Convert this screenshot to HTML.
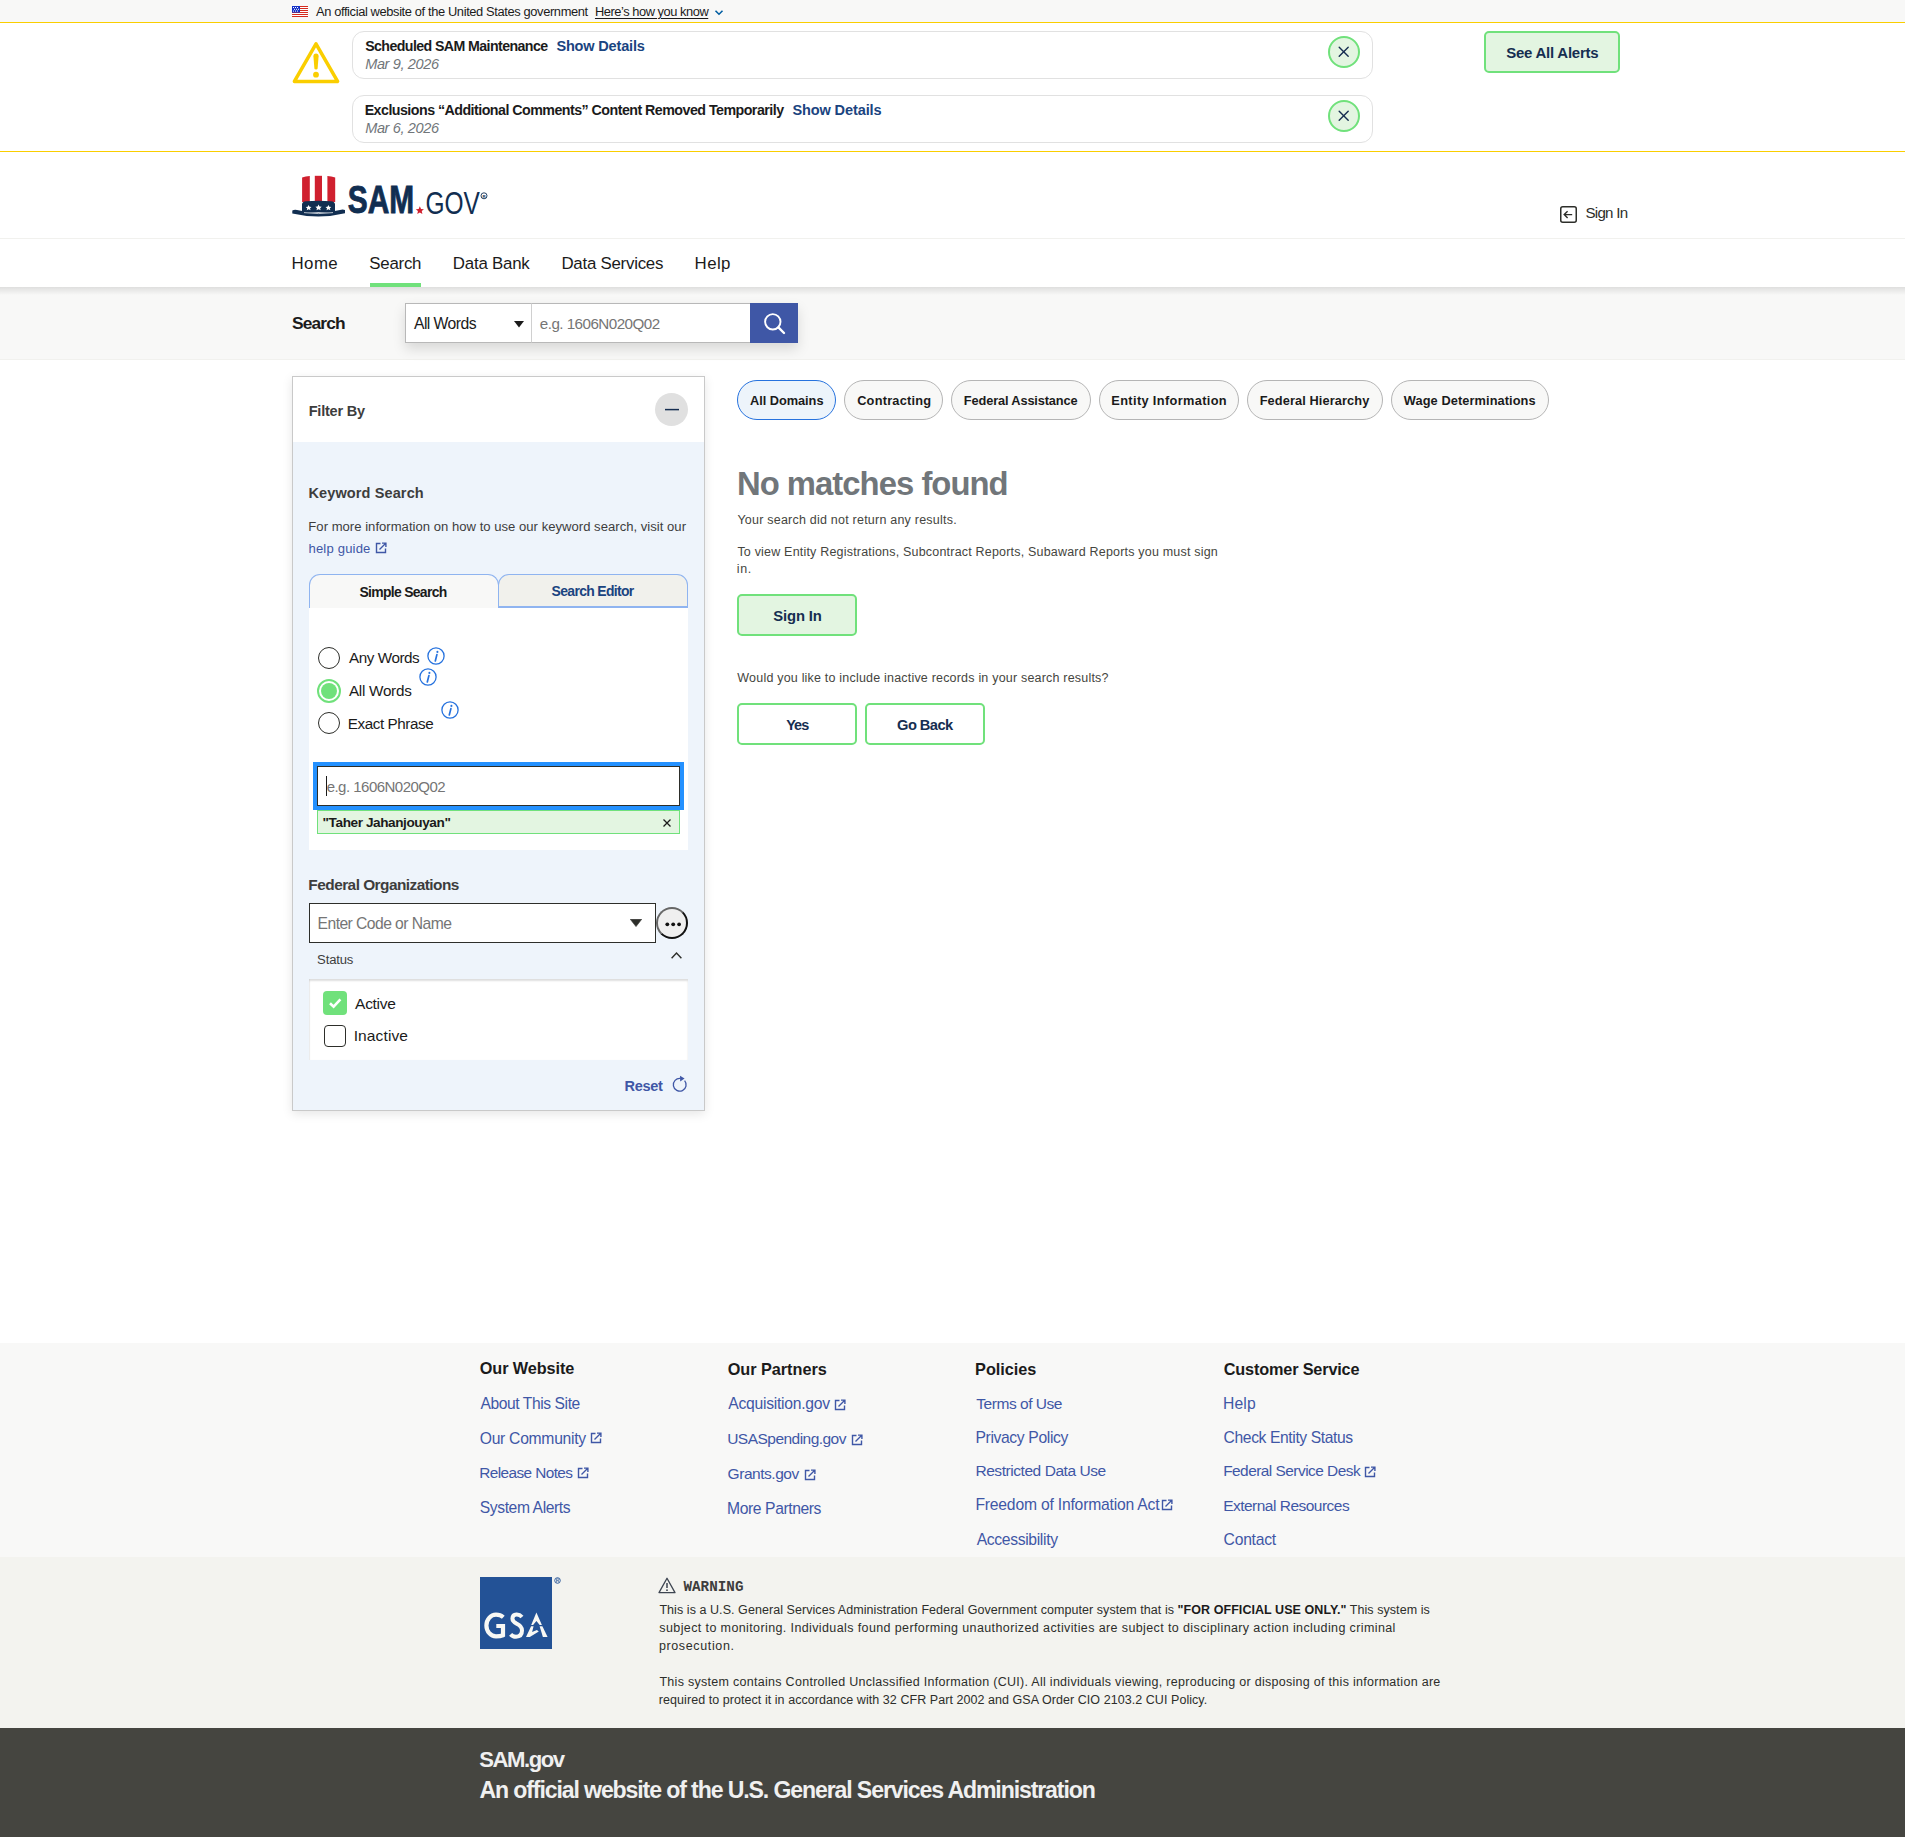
<!DOCTYPE html><html><head><meta charset="utf-8"><title>SAM.gov Search</title><style>

html,body{margin:0;padding:0}
body{width:1905px;height:1837px;overflow:hidden;position:relative;background:#fff;font-family:"Liberation Sans",sans-serif}
.t{position:absolute;white-space:nowrap;line-height:1;margin:0}
.t b{font-weight:bold}

</style></head><body>
<div style="position:absolute;left:0px;top:0px;width:1905px;height:22px;background:#f8f8f7"></div>
<div style="position:absolute;left:0px;top:22px;width:1905px;height:1px;background:#face00"></div>
<svg style="position:absolute;left:292px;top:6px;" width="16" height="11" viewBox="0 0 16 11"><rect x="0" y="0" width="16" height="11" fill="#fff"/><rect x="0" y="0" width="16" height="1" fill="#d52b1e"/><rect x="0" y="2" width="16" height="1" fill="#d52b1e"/><rect x="0" y="4" width="16" height="1" fill="#d52b1e"/><rect x="0" y="6" width="16" height="1" fill="#d52b1e"/><rect x="0" y="8" width="16" height="1" fill="#d52b1e"/><rect x="0" y="10" width="16" height="1" fill="#d52b1e"/><rect x="0" y="0" width="8" height="6.6" fill="#1432c8"/><rect x="1.0" y="1.0" width="1" height="1" fill="#fff"/><rect x="1.0" y="4.6" width="1" height="1" fill="#fff"/><rect x="3.0" y="1.0" width="1" height="1" fill="#fff"/><rect x="3.0" y="4.6" width="1" height="1" fill="#fff"/><rect x="5.0" y="1.0" width="1" height="1" fill="#fff"/><rect x="5.0" y="4.6" width="1" height="1" fill="#fff"/><rect x="2.0" y="2.8" width="1" height="1" fill="#fff"/><rect x="4.0" y="2.8" width="1" height="1" fill="#fff"/><rect x="6.0" y="2.8" width="1" height="1" fill="#fff"/></svg>
<svg style="position:absolute;left:714px;top:9px;" width="10" height="7" viewBox="0 0 10 7"><path d="M1.5 1.8 L5 5.2 L8.5 1.8" fill="none" stroke="#005ea2" stroke-width="1.6"/></svg>
<div style="position:absolute;left:0px;top:151px;width:1905px;height:1px;background:#face00"></div>
<svg style="position:absolute;left:292px;top:41px;" width="48" height="44" viewBox="0 0 48 44"><path d="M24 2.8 L45.6 40.4 L2.4 40.4 Z" fill="none" stroke="#face00" stroke-width="3.5" stroke-linejoin="round"/><path d="M21.4 15.2 Q21.4 12.6 24 12.6 Q26.6 12.6 26.6 15.2 L25.6 27.6 Q25.5 28.6 24 28.6 Q22.5 28.6 22.4 27.6 Z" fill="#face00"/><circle cx="24" cy="33.7" r="2.9" fill="#face00"/></svg>
<div style="position:absolute;left:352px;top:31px;width:1021px;height:48px;box-sizing:border-box;border:1.5px solid #e1e1e1;border-radius:12px;background:#fff"></div>
<div style="position:absolute;left:1328px;top:36px;width:32px;height:32px;box-sizing:border-box;border:2px solid #70e17b;border-radius:50%;background:#e3f5e1"></div>
<svg style="position:absolute;left:1338px;top:46px;" width="12" height="12" viewBox="0 0 12 12"><line x1="1.2" y1="1.2" x2="10.2" y2="10.2" stroke="#162e51" stroke-width="1.4" stroke-linecap="round"/><line x1="10.2" y1="1.2" x2="1.2" y2="10.2" stroke="#162e51" stroke-width="1.4" stroke-linecap="round"/></svg>
<div style="position:absolute;left:352px;top:95px;width:1021px;height:48px;box-sizing:border-box;border:1.5px solid #e1e1e1;border-radius:12px;background:#fff"></div>
<div style="position:absolute;left:1328px;top:100px;width:32px;height:32px;box-sizing:border-box;border:2px solid #70e17b;border-radius:50%;background:#e3f5e1"></div>
<svg style="position:absolute;left:1338px;top:110px;" width="12" height="12" viewBox="0 0 12 12"><line x1="1.2" y1="1.2" x2="10.2" y2="10.2" stroke="#162e51" stroke-width="1.4" stroke-linecap="round"/><line x1="10.2" y1="1.2" x2="1.2" y2="10.2" stroke="#162e51" stroke-width="1.4" stroke-linecap="round"/></svg>
<div style="position:absolute;left:1484px;top:31px;width:136px;height:42px;box-sizing:border-box;border:2px solid #70e17b;border-radius:5px;background:#e3f5e1"></div>
<svg style="position:absolute;left:292px;top:172px;" width="200" height="50" viewBox="0 0 200 50"><path d="M10.1 5.4 Q13.6 4.4 17.8 4 L17.8 30 L10.1 30 Z" fill="#d0202f"/><path d="M22.8 3.8 L30 3.8 L30 30 L22.8 30 Z" fill="#d0202f"/><path d="M35.4 4 Q39.4 4.4 43.2 5.4 L43.2 30 L35.4 30 Z" fill="#d0202f"/><path d="M10 32.6 Q10 29.6 14 29.3 Q26.6 28 39 29.3 Q43 29.6 43 32.6 L43 40 L10 40 Z" fill="#112e51"/><path d="M16.6 32.9 l0.9 1.9 2 .2 -1.5 1.3 .5 2 -1.9 -1 -1.8 1 .4 -2 -1.5 -1.3 2 -.2z" fill="#fff"/><path d="M26.5 32.6 l1 2 2.2 .2 -1.6 1.4 .5 2.1 -2.1 -1.1 -2 1.1 .5 -2.1 -1.6 -1.4 2.2 -.2z" fill="#fff"/><path d="M36.4 32.9 l0.9 1.9 2 .2 -1.5 1.3 .5 2 -1.9 -1 -1.8 1 .4 -2 -1.5 -1.3 2 -.2z" fill="#fff"/><path d="M0.3 38.4 Q2.6 37.2 5 37.9 Q26.5 43.4 48 37.9 Q51 37.2 53 38 L53 41.2 Q27 47.6 0.3 41.4 Z" fill="#112e51"/><path d="M12 40.6 Q26.5 42.6 41 40.6" fill="none" stroke="#fff" stroke-width="0.7"/><text x="55.8" y="40.6" font-family="Liberation Sans" font-weight="bold" font-size="39" fill="#112e51" stroke="#112e51" stroke-width="0.9" textLength="66.4" lengthAdjust="spacingAndGlyphs">SAM</text><path d="M127.8 34.2 l1.25 2.7 2.9 .3 -2.2 1.9 .65 2.9 -2.6 -1.5 -2.5 1.5 .65 -2.9 -2.2 -1.9 2.9 -.3z" fill="#d0202f"/><text x="133.4" y="41.5" font-family="Liberation Sans" font-size="32" fill="#112e51" textLength="54.4" lengthAdjust="spacingAndGlyphs" stroke="#fff" stroke-width="1.1" paint-order="stroke">GOV</text><circle cx="192" cy="23.8" r="3" fill="none" stroke="#112e51" stroke-width="0.9"/><text x="190.5" y="25.5" font-family="Liberation Sans" font-weight="bold" font-size="4.4" fill="#112e51">R</text></svg>
<div style="position:absolute;left:0px;top:238px;width:1905px;height:1px;background:#f1f1ee"></div>
<svg style="position:absolute;left:1559px;top:205px;" width="19" height="19" viewBox="0 0 19 19"><rect x="1.75" y="1.75" width="15.5" height="15.5" rx="2" fill="none" stroke="#2d2e2a" stroke-width="1.5"/><path d="M13.2 9.6 L5.2 9.6 M8.6 6.2 L5.2 9.6 L8.6 13" fill="none" stroke="#2d2e2a" stroke-width="1.4"/></svg>
<div style="position:absolute;left:370px;top:283px;width:51px;height:4px;background:#70e17b"></div>
<div style="position:absolute;left:0px;top:287px;width:1905px;height:72px;background:#f8f8f7"></div>
<div style="position:absolute;left:0px;top:287px;width:1905px;height:8px;background:linear-gradient(rgba(0,0,0,0.10),rgba(0,0,0,0))"></div>
<div style="position:absolute;left:0px;top:359px;width:1905px;height:1px;background:#f1f1ee"></div>
<div style="position:absolute;left:405px;top:303px;width:393px;height:40px;box-shadow:0 6px 12px rgba(0,0,0,0.13)"></div>
<div style="position:absolute;left:405px;top:303px;width:127px;height:40px;box-sizing:border-box;border:1px solid #b8b8b8;background:#fff"></div>
<div style="position:absolute;left:531px;top:303px;width:220px;height:40px;box-sizing:border-box;border:1px solid #b8b8b8;border-left-color:#d0d0d0;background:#fff"></div>
<svg style="position:absolute;left:514px;top:321px;" width="10" height="7" viewBox="0 0 10 7"><path d="M0 0 L10 0 L5 6.5 Z" fill="#1b1b1b"/></svg>
<div style="position:absolute;left:750px;top:303px;width:48px;height:40px;background:#3f57a6"></div>
<svg style="position:absolute;left:763px;top:312px;" width="24" height="24" viewBox="0 0 24 24"><circle cx="9.8" cy="9.8" r="7.7" fill="none" stroke="#fff" stroke-width="1.9"/><path d="M15.4 15.4 L21 21" stroke="#fff" stroke-width="2.4" stroke-linecap="round"/></svg>
<div style="position:absolute;left:292px;top:376px;width:413px;height:735px;box-sizing:border-box;border:1px solid #c9c9c9;background:#eef4fb;box-shadow:0 3px 10px rgba(0,0,0,0.10)"></div>
<div style="position:absolute;left:293px;top:377px;width:411px;height:65px;background:#fff"></div>
<div style="position:absolute;left:655px;top:393px;width:33px;height:33px;border-radius:50%;background:#e0e0e0"></div>
<svg style="position:absolute;left:664px;top:406px;" width="16" height="7" viewBox="0 0 16 7"><line x1="1" y1="3.6" x2="15" y2="3.6" stroke="#162e51" stroke-width="1.5"/></svg>
<svg style="position:absolute;left:375px;top:542px;" width="12" height="12" viewBox="0 0 12 12"><path d="M5.5 1.5 L1.5 1.5 L1.5 10.5 L10.5 10.5 L10.5 6.5" fill="none" stroke="#3f57a6" stroke-width="1.4"/><path d="M4.5 7.5 L10.5 1.5 M7 1.1 L10.9 1.1 L10.9 5" fill="none" stroke="#3f57a6" stroke-width="1.4"/></svg>
<div style="position:absolute;left:309px;top:574px;width:190px;height:34px;box-sizing:border-box;border:1px solid #8fb4f0;border-bottom:none;border-radius:11px 11px 0 0;background:#f8f8f7"></div>
<div style="position:absolute;left:498px;top:574px;width:190px;height:34px;box-sizing:border-box;border:1px solid #8fb4f0;border-radius:11px 11px 0 0;background:#f1f1ec;border-bottom:2px solid #8fb4f0"></div>
<div style="position:absolute;left:309px;top:608px;width:379px;height:242px;background:#fff"></div>
<div style="position:absolute;left:318px;top:647px;width:22px;height:22px;box-sizing:border-box;border:1.6px solid #2d2e2a;border-radius:50%;background:#fff"></div>
<div style="position:absolute;left:317px;top:679px;width:24px;height:24px;box-sizing:border-box;border:2px solid #70e17b;border-radius:50%;background:#fff"></div>
<div style="position:absolute;left:321px;top:683px;width:16px;height:16px;border-radius:50%;background:#70e17b"></div>
<div style="position:absolute;left:318px;top:712px;width:22px;height:22px;box-sizing:border-box;border:1.6px solid #2d2e2a;border-radius:50%;background:#fff"></div>
<svg style="position:absolute;left:427px;top:647px;" width="18" height="18" viewBox="0 0 18 18"><circle cx="9" cy="9" r="8.1" fill="none" stroke="#2672de" stroke-width="1.3"/><path d="M9.9 7.6 L8.3 14" stroke="#2672de" stroke-width="1.7" stroke-linecap="round"/><circle cx="10.4" cy="4.9" r="1.05" fill="#2672de"/></svg>
<svg style="position:absolute;left:419px;top:668px;" width="18" height="18" viewBox="0 0 18 18"><circle cx="9" cy="9" r="8.1" fill="none" stroke="#2672de" stroke-width="1.3"/><path d="M9.9 7.6 L8.3 14" stroke="#2672de" stroke-width="1.7" stroke-linecap="round"/><circle cx="10.4" cy="4.9" r="1.05" fill="#2672de"/></svg>
<svg style="position:absolute;left:441px;top:701px;" width="18" height="18" viewBox="0 0 18 18"><circle cx="9" cy="9" r="8.1" fill="none" stroke="#2672de" stroke-width="1.3"/><path d="M9.9 7.6 L8.3 14" stroke="#2672de" stroke-width="1.7" stroke-linecap="round"/><circle cx="10.4" cy="4.9" r="1.05" fill="#2672de"/></svg>
<div style="position:absolute;left:313px;top:762px;width:371px;height:48px;background:#2491ff"></div>
<div style="position:absolute;left:317px;top:766px;width:363px;height:40px;box-sizing:border-box;border:1.3px solid #2d2e2a;background:#fff"></div>
<div style="position:absolute;left:326px;top:776px;width:1.3px;height:20px;background:#1b1b1b"></div>
<div style="position:absolute;left:317px;top:810px;width:363px;height:24px;box-sizing:border-box;border:1px solid #70e17b;background:#e3f5e1"></div>
<svg style="position:absolute;left:662px;top:818px;" width="10" height="10" viewBox="0 0 10 10"><path d="M1.5 1.5 L8.5 8.5 M8.5 1.5 L1.5 8.5" stroke="#1b1b1b" stroke-width="1.3"/></svg>
<div style="position:absolute;left:309px;top:903px;width:347px;height:40px;box-sizing:border-box;border:1.5px solid #2d2e2a;background:#fff"></div>
<svg style="position:absolute;left:630px;top:919px;" width="12" height="8" viewBox="0 0 12 8"><path d="M0.3 0.3 L11.7 0.3 L6 7.6 Z" fill="#2d2e2a" stroke="#2d2e2a" stroke-width="0.6" stroke-linejoin="round"/></svg>
<div style="position:absolute;left:656px;top:907px;width:32px;height:32px;box-sizing:border-box;border:2px solid #111;border-top-color:#666;border-left-color:#666;border-radius:50%;background:#efefef"></div>
<svg style="position:absolute;left:664px;top:920px;" width="18" height="8" viewBox="0 0 18 8"><circle cx="3.3" cy="4.3" r="1.9" fill="#111"/><circle cx="9.2" cy="4.3" r="1.9" fill="#111"/><circle cx="15.1" cy="4.3" r="1.9" fill="#111"/></svg>
<svg style="position:absolute;left:670px;top:950px;" width="13" height="10" viewBox="0 0 13 10"><path d="M1.6 8.2 L6.5 3 L11.4 8.2" fill="none" stroke="#2d2e2a" stroke-width="1.4"/></svg>
<div style="position:absolute;left:309px;top:979px;width:379px;height:81px;background:#fff;box-shadow:inset 0 2px 2px rgba(0,0,0,0.13), inset 1px 0 1px rgba(0,0,0,0.05)"></div>
<div style="position:absolute;left:323px;top:991px;width:24px;height:24px;border-radius:4px;background:#70e17b"></div>
<svg style="position:absolute;left:323px;top:991px;" width="24" height="24" viewBox="0 0 24 24"><path d="M7 12.2 L10.6 15.6 L17.4 8.4" fill="none" stroke="#fff" stroke-width="2.6"/></svg>
<div style="position:absolute;left:324px;top:1025px;width:22px;height:22px;box-sizing:border-box;border:1.7px solid #2d2e2a;border-radius:4px;background:#fff"></div>
<svg style="position:absolute;left:672px;top:1074px;" width="17" height="19" viewBox="0 0 17 19"><path d="M12.6 6.6 A6.4 6.4 0 1 1 8.4 4.4" fill="none" stroke="#3f57a6" stroke-width="1.3"/><path d="M8 1.8 L12.6 4.6 L8.2 7.4 Z" fill="#3f57a6"/></svg>
<div style="position:absolute;left:737px;top:380px;width:99px;height:40px;box-sizing:border-box;border:1.3px solid #2672de;border-radius:20px;background:#edf4fb"></div>
<div style="position:absolute;left:844px;top:380px;width:99px;height:40px;box-sizing:border-box;border:1px solid #b5b5b5;border-radius:20px;background:#f8f8f7"></div>
<div style="position:absolute;left:951px;top:380px;width:140px;height:40px;box-sizing:border-box;border:1px solid #b5b5b5;border-radius:20px;background:#f8f8f7"></div>
<div style="position:absolute;left:1099px;top:380px;width:140px;height:40px;box-sizing:border-box;border:1px solid #b5b5b5;border-radius:20px;background:#f8f8f7"></div>
<div style="position:absolute;left:1247px;top:380px;width:136px;height:40px;box-sizing:border-box;border:1px solid #b5b5b5;border-radius:20px;background:#f8f8f7"></div>
<div style="position:absolute;left:1391px;top:380px;width:158px;height:40px;box-sizing:border-box;border:1px solid #b5b5b5;border-radius:20px;background:#f8f8f7"></div>
<div style="position:absolute;left:737px;top:594px;width:120px;height:42px;box-sizing:border-box;border:2px solid #70e17b;border-radius:5px;background:#e3f5e1"></div>
<div style="position:absolute;left:737px;top:703px;width:120px;height:42px;box-sizing:border-box;border:2px solid #70e17b;border-radius:5px;background:#fff"></div>
<div style="position:absolute;left:865px;top:703px;width:120px;height:42px;box-sizing:border-box;border:2px solid #70e17b;border-radius:5px;background:#fff"></div>
<div style="position:absolute;left:0px;top:1343px;width:1905px;height:214px;background:#f8f8f7"></div>
<div style="position:absolute;left:0px;top:1557px;width:1905px;height:171px;background:#f3f3ef"></div>
<div style="position:absolute;left:0px;top:1728px;width:1905px;height:109px;background:#454540"></div>
<svg style="position:absolute;left:834px;top:1399px;" width="12" height="12" viewBox="0 0 12 12"><path d="M5.5 1.5 L1.5 1.5 L1.5 10.5 L10.5 10.5 L10.5 6.5" fill="none" stroke="#3f57a6" stroke-width="1.4"/><path d="M4.5 7.5 L10.5 1.5 M7 1.1 L10.9 1.1 L10.9 5" fill="none" stroke="#3f57a6" stroke-width="1.4"/></svg>
<svg style="position:absolute;left:851px;top:1434px;" width="12" height="12" viewBox="0 0 12 12"><path d="M5.5 1.5 L1.5 1.5 L1.5 10.5 L10.5 10.5 L10.5 6.5" fill="none" stroke="#3f57a6" stroke-width="1.4"/><path d="M4.5 7.5 L10.5 1.5 M7 1.1 L10.9 1.1 L10.9 5" fill="none" stroke="#3f57a6" stroke-width="1.4"/></svg>
<svg style="position:absolute;left:804px;top:1469px;" width="12" height="12" viewBox="0 0 12 12"><path d="M5.5 1.5 L1.5 1.5 L1.5 10.5 L10.5 10.5 L10.5 6.5" fill="none" stroke="#3f57a6" stroke-width="1.4"/><path d="M4.5 7.5 L10.5 1.5 M7 1.1 L10.9 1.1 L10.9 5" fill="none" stroke="#3f57a6" stroke-width="1.4"/></svg>
<svg style="position:absolute;left:590px;top:1432px;" width="12" height="12" viewBox="0 0 12 12"><path d="M5.5 1.5 L1.5 1.5 L1.5 10.5 L10.5 10.5 L10.5 6.5" fill="none" stroke="#3f57a6" stroke-width="1.4"/><path d="M4.5 7.5 L10.5 1.5 M7 1.1 L10.9 1.1 L10.9 5" fill="none" stroke="#3f57a6" stroke-width="1.4"/></svg>
<svg style="position:absolute;left:577px;top:1467px;" width="12" height="12" viewBox="0 0 12 12"><path d="M5.5 1.5 L1.5 1.5 L1.5 10.5 L10.5 10.5 L10.5 6.5" fill="none" stroke="#3f57a6" stroke-width="1.4"/><path d="M4.5 7.5 L10.5 1.5 M7 1.1 L10.9 1.1 L10.9 5" fill="none" stroke="#3f57a6" stroke-width="1.4"/></svg>
<svg style="position:absolute;left:1161px;top:1499px;" width="12" height="12" viewBox="0 0 12 12"><path d="M5.5 1.5 L1.5 1.5 L1.5 10.5 L10.5 10.5 L10.5 6.5" fill="none" stroke="#3f57a6" stroke-width="1.4"/><path d="M4.5 7.5 L10.5 1.5 M7 1.1 L10.9 1.1 L10.9 5" fill="none" stroke="#3f57a6" stroke-width="1.4"/></svg>
<svg style="position:absolute;left:1364px;top:1466px;" width="12" height="12" viewBox="0 0 12 12"><path d="M5.5 1.5 L1.5 1.5 L1.5 10.5 L10.5 10.5 L10.5 6.5" fill="none" stroke="#3f57a6" stroke-width="1.4"/><path d="M4.5 7.5 L10.5 1.5 M7 1.1 L10.9 1.1 L10.9 5" fill="none" stroke="#3f57a6" stroke-width="1.4"/></svg>
<svg style="position:absolute;left:480px;top:1577px;" width="72" height="72" viewBox="0 0 72 72"><rect x="0" y="0" width="72" height="72" fill="#235296"/><path d="M23.3 40.2 Q20.4 37.6 16 37.6 A9.6 10.9 0 0 0 16 59.4 Q20.2 59.4 23 58.2 L23 49 L16.3 49" fill="none" stroke="#f8f8f4" stroke-width="4.2"/><path d="M42 40 Q39.6 37.4 36.4 37.6 Q32.6 37.8 32.4 41.6 Q32.4 44.6 36.6 46.6 Q42 49 42 53.6 Q42 59.6 36 59.8 Q32.6 59.8 30.6 57.4" fill="none" stroke="#f8f8f4" stroke-width="4"/><path d="M56.4 35.6 L61.9 48 L59.7 48 L56.4 44.1 L53.1 48 L51.2 48 Z" fill="#f8f8f4"/><path d="M59.6 49.3 L62.4 49.3 L67.6 60 L62.9 60 Z" fill="#f8f8f4"/><path d="M51.1 49.3 L53.6 49.3 L52.1 55 L56.9 53.1 L58.8 54.5 L49.8 60 L46 60 Z" fill="#f8f8f4"/></svg>
<svg style="position:absolute;left:553px;top:1576px;" width="9" height="9" viewBox="0 0 9 9"><circle cx="4.5" cy="4.5" r="2.8" fill="none" stroke="#235296" stroke-width="0.9"/><path d="M3.6 6.4 L3.6 2.8 L5 2.8 Q6 2.8 6 3.7 Q6 4.6 5 4.6 L3.6 4.6 M4.8 4.6 L6 6.4" fill="none" stroke="#235296" stroke-width="0.6"/></svg>
<svg style="position:absolute;left:658px;top:1577px;" width="18" height="17" viewBox="0 0 18 17"><path d="M9 1.2 L17 15.6 L1 15.6 Z" fill="none" stroke="#3d4551" stroke-width="1.3" stroke-linejoin="round"/><path d="M9 6 L9 11" stroke="#3d4551" stroke-width="1.5"/><circle cx="9" cy="13.2" r="0.9" fill="#3d4551"/></svg>
<div class="t" id="t0" style="left:315.97px;top:6.00px;font-size:12.88px;letter-spacing:-0.378px;color:#1b1b1b;">An official website of the United States government</div>
<div class="t" id="t1" style="left:594.95px;top:6.00px;font-size:12.85px;letter-spacing:-0.448px;color:#1b1b1b;text-decoration:underline;text-underline-offset:1.5px;">Here&rsquo;s how you know</div>
<div class="t" id="t2" style="left:365.19px;top:39.00px;font-size:14.19px;letter-spacing:-0.592px;font-weight:bold;color:#1b1b1b;">Scheduled SAM Maintenance</div>
<div class="t" id="t3" style="left:556.38px;top:39.00px;font-size:14.54px;letter-spacing:-0.175px;font-weight:bold;color:#1a4480;">Show Details</div>
<div class="t" id="t4" style="left:365.15px;top:57.00px;font-size:14.54px;letter-spacing:-0.360px;font-style:italic;color:#71767a;">Mar 9, 2026</div>
<div class="t" id="t5" style="left:364.65px;top:103.00px;font-size:14.24px;letter-spacing:-0.528px;font-weight:bold;color:#1b1b1b;">Exclusions &ldquo;Additional Comments&rdquo; Content Removed Temporarily</div>
<div class="t" id="t6" style="left:792.38px;top:103.00px;font-size:14.54px;letter-spacing:-0.111px;font-weight:bold;color:#1a4480;">Show Details</div>
<div class="t" id="t7" style="left:365.15px;top:121.00px;font-size:14.54px;letter-spacing:-0.360px;font-style:italic;color:#71767a;">Mar 6, 2026</div>
<div class="t" id="t8" style="left:1506.17px;top:46.00px;font-size:14.97px;letter-spacing:-0.228px;font-weight:bold;color:#162e51;">See All Alerts</div>
<div class="t" id="t9" style="left:1585.41px;top:205.00px;font-size:15.11px;letter-spacing:-0.708px;color:#2d2e2a;">Sign In</div>
<div class="t" id="t10" style="left:291.52px;top:256.00px;font-size:16.86px;letter-spacing:0.416px;color:#1b1b1b;">Home</div>
<div class="t" id="t11" style="left:369.23px;top:256.00px;font-size:16.86px;letter-spacing:-0.232px;color:#1b1b1b;">Search</div>
<div class="t" id="t12" style="left:452.82px;top:256.00px;font-size:16.86px;letter-spacing:-0.222px;color:#1b1b1b;">Data Bank</div>
<div class="t" id="t13" style="left:561.42px;top:256.00px;font-size:16.86px;letter-spacing:-0.247px;color:#1b1b1b;">Data Services</div>
<div class="t" id="t14" style="left:694.52px;top:256.00px;font-size:16.86px;letter-spacing:0.435px;color:#1b1b1b;">Help</div>
<div class="t" id="t15" style="left:292.00px;top:315.00px;font-size:17.36px;letter-spacing:-0.874px;font-weight:bold;color:#1b1b1b;">Search</div>
<div class="t" id="t16" style="left:413.97px;top:316.00px;font-size:15.72px;letter-spacing:-0.547px;color:#1b1b1b;">All Words</div>
<div class="t" id="t17" style="left:539.85px;top:316.00px;font-size:15.19px;letter-spacing:-0.537px;color:#757575;">e.g. 1606N020Q02</div>
<div class="t" id="t18" style="left:308.63px;top:404.00px;font-size:14.54px;letter-spacing:-0.199px;font-weight:bold;color:#3d3d3d;">Filter By</div>
<div class="t" id="t19" style="left:308.43px;top:486.00px;font-size:14.54px;letter-spacing:0.108px;font-weight:bold;color:#3d3d3d;">Keyword Search</div>
<div class="t" id="t20" style="left:308.33px;top:520.00px;font-size:13.08px;letter-spacing:0.018px;color:#3d3d3d;">For more information on how to use our keyword search, visit our</div>
<div class="t" id="t21" style="left:308.49px;top:542.00px;font-size:13.08px;letter-spacing:0.170px;color:#3f57a6;">help guide</div>
<div class="t" id="t22" style="left:359.40px;top:586.00px;font-size:13.96px;letter-spacing:-0.693px;font-weight:bold;color:#1b1b1b;">Simple Search</div>
<div class="t" id="t23" style="left:551.60px;top:585.00px;font-size:13.94px;letter-spacing:-0.667px;font-weight:bold;color:#1a4480;">Search Editor</div>
<div class="t" id="t24" style="left:348.97px;top:650.00px;font-size:15.26px;letter-spacing:-0.441px;color:#1b1b1b;">Any Words</div>
<div class="t" id="t25" style="left:348.97px;top:683.00px;font-size:15.26px;letter-spacing:-0.273px;color:#1b1b1b;">All Words</div>
<div class="t" id="t26" style="left:347.75px;top:716.00px;font-size:15.23px;letter-spacing:-0.418px;color:#1b1b1b;">Exact Phrase</div>
<div class="t" id="t27" style="left:326.66px;top:779.00px;font-size:15.04px;letter-spacing:-0.535px;color:#757575;">e.g. 1606N020Q02</div>
<div class="t" id="t28" style="left:322.60px;top:816.00px;font-size:13.59px;letter-spacing:-0.410px;font-weight:bold;color:#1b1b1b;">&quot;Taher Jahanjouyan&quot;</div>
<div class="t" id="t29" style="left:308.37px;top:877.00px;font-size:15.41px;letter-spacing:-0.539px;font-weight:bold;color:#3d3d3d;">Federal Organizations</div>
<div class="t" id="t30" style="left:317.61px;top:916.00px;font-size:15.69px;letter-spacing:-0.564px;color:#757575;">Enter Code or Name</div>
<div class="t" id="t31" style="left:317.11px;top:953.00px;font-size:13.08px;letter-spacing:-0.162px;color:#3d3d3d;">Status</div>
<div class="t" id="t32" style="left:355.07px;top:996.00px;font-size:15.55px;letter-spacing:-0.304px;color:#1b1b1b;">Active</div>
<div class="t" id="t33" style="left:353.66px;top:1028.00px;font-size:15.55px;letter-spacing:0.105px;color:#1b1b1b;">Inactive</div>
<div class="t" id="t34" style="left:624.53px;top:1079.00px;font-size:14.54px;letter-spacing:-0.307px;font-weight:bold;color:#3f57a6;">Reset</div>
<div class="t" id="t35" style="left:749.98px;top:395.00px;font-size:12.79px;letter-spacing:-0.033px;font-weight:bold;color:#1b1b1b;">All Domains</div>
<div class="t" id="t36" style="left:857.18px;top:395.00px;font-size:12.79px;letter-spacing:0.216px;font-weight:bold;color:#1b1b1b;">Contracting</div>
<div class="t" id="t37" style="left:963.84px;top:395.00px;font-size:12.79px;letter-spacing:-0.133px;font-weight:bold;color:#1b1b1b;">Federal Assistance</div>
<div class="t" id="t38" style="left:1111.34px;top:395.00px;font-size:12.79px;letter-spacing:0.352px;font-weight:bold;color:#1b1b1b;">Entity Information</div>
<div class="t" id="t39" style="left:1259.64px;top:395.00px;font-size:12.79px;letter-spacing:0.108px;font-weight:bold;color:#1b1b1b;">Federal Hierarchy</div>
<div class="t" id="t40" style="left:1403.79px;top:395.00px;font-size:12.79px;letter-spacing:0.091px;font-weight:bold;color:#1b1b1b;">Wage Determinations</div>
<div class="t" id="t41" style="left:736.91px;top:468.00px;font-size:32.81px;letter-spacing:-0.959px;font-weight:bold;color:#71767a;">No matches found</div>
<div class="t" id="t42" style="left:737.43px;top:514.00px;font-size:12.50px;letter-spacing:0.222px;color:#454540;">Your search did not return any results.</div>
<div class="t" id="t43" style="left:737.42px;top:546.00px;font-size:12.50px;letter-spacing:0.195px;color:#454540;">To view Entity Registrations, Subcontract Reports, Subaward Reports you must sign</div>
<div class="t" id="t44" style="left:736.86px;top:563.00px;font-size:12.50px;letter-spacing:0.637px;color:#454540;">in.</div>
<div class="t" id="t45" style="left:773.27px;top:609.00px;font-size:14.83px;letter-spacing:-0.132px;font-weight:bold;color:#162e51;">Sign In</div>
<div class="t" id="t46" style="left:737.35px;top:672.00px;font-size:12.50px;letter-spacing:0.198px;color:#454540;">Would you like to include inactive records in your search results?</div>
<div class="t" id="t47" style="left:786.15px;top:718.00px;font-size:14.45px;letter-spacing:-0.894px;font-weight:bold;color:#162e51;">Yes</div>
<div class="t" id="t48" style="left:897.10px;top:718.00px;font-size:14.68px;letter-spacing:-0.583px;font-weight:bold;color:#162e51;">Go Back</div>
<div class="t" id="t49" style="left:479.83px;top:1360.00px;font-size:16.28px;letter-spacing:-0.109px;font-weight:bold;color:#1b1b1b;">Our Website</div>
<div class="t" id="t50" style="left:727.73px;top:1361.00px;font-size:16.28px;letter-spacing:-0.037px;font-weight:bold;color:#1b1b1b;">Our Partners</div>
<div class="t" id="t51" style="left:975.11px;top:1361.00px;font-size:16.28px;letter-spacing:-0.033px;font-weight:bold;color:#1b1b1b;">Policies</div>
<div class="t" id="t52" style="left:1223.73px;top:1361.00px;font-size:16.28px;letter-spacing:-0.167px;font-weight:bold;color:#1b1b1b;">Customer Service</div>
<div class="t" id="t53" style="left:480.47px;top:1396.00px;font-size:15.62px;letter-spacing:-0.411px;color:#3f57a6;">About This Site</div>
<div class="t" id="t54" style="left:479.76px;top:1431.00px;font-size:15.70px;letter-spacing:-0.289px;color:#3f57a6;">Our Community</div>
<div class="t" id="t55" style="left:479.24px;top:1465.00px;font-size:15.36px;letter-spacing:-0.581px;color:#3f57a6;">Release Notes</div>
<div class="t" id="t56" style="left:479.79px;top:1500.00px;font-size:15.66px;letter-spacing:-0.410px;color:#3f57a6;">System Alerts</div>
<div class="t" id="t57" style="left:728.37px;top:1396.00px;font-size:15.70px;letter-spacing:-0.274px;color:#3f57a6;">Acquisition.gov</div>
<div class="t" id="t58" style="left:727.20px;top:1431.00px;font-size:15.53px;letter-spacing:-0.538px;color:#3f57a6;">USASpending.gov</div>
<div class="t" id="t59" style="left:727.62px;top:1466.00px;font-size:15.56px;letter-spacing:-0.490px;color:#3f57a6;">Grants.gov</div>
<div class="t" id="t60" style="left:727.11px;top:1501.00px;font-size:15.68px;letter-spacing:-0.413px;color:#3f57a6;">More Partners</div>
<div class="t" id="t61" style="left:976.35px;top:1396.00px;font-size:15.54px;letter-spacing:-0.492px;color:#3f57a6;">Terms of Use</div>
<div class="t" id="t62" style="left:975.41px;top:1430.00px;font-size:15.70px;letter-spacing:-0.356px;color:#3f57a6;">Privacy Policy</div>
<div class="t" id="t63" style="left:975.43px;top:1463.00px;font-size:15.54px;letter-spacing:-0.454px;color:#3f57a6;">Restricted Data Use</div>
<div class="t" id="t64" style="left:975.41px;top:1497.00px;font-size:15.70px;letter-spacing:-0.201px;color:#3f57a6;">Freedom of Information Act</div>
<div class="t" id="t65" style="left:976.67px;top:1532.00px;font-size:15.70px;letter-spacing:-0.340px;color:#3f57a6;">Accessibility</div>
<div class="t" id="t66" style="left:1223.11px;top:1396.00px;font-size:15.70px;letter-spacing:0.094px;color:#3f57a6;">Help</div>
<div class="t" id="t67" style="left:1223.60px;top:1430.00px;font-size:15.66px;letter-spacing:-0.391px;color:#3f57a6;">Check Entity Status</div>
<div class="t" id="t68" style="left:1223.14px;top:1463.00px;font-size:15.42px;letter-spacing:-0.514px;color:#3f57a6;">Federal Service Desk</div>
<div class="t" id="t69" style="left:1223.13px;top:1498.00px;font-size:15.48px;letter-spacing:-0.496px;color:#3f57a6;">External Resources</div>
<div class="t" id="t70" style="left:1223.60px;top:1532.00px;font-size:15.70px;letter-spacing:-0.261px;color:#3f57a6;">Contact</div>
<div class="t" id="t71" style="left:683.40px;top:1580.00px;font-size:14.27px;letter-spacing:0.028px;font-weight:bold;font-family:'Liberation Mono',monospace;color:#3d3d3d;">WARNING</div>
<div class="t" id="t72" style="left:659.42px;top:1604.00px;font-size:12.50px;letter-spacing:0.061px;color:#2d2e2a;">This is a U.S. General Services Administration Federal Government computer system that is <b style="color:#1b1b1b">&quot;FOR OFFICIAL USE ONLY.&quot;</b> This system is</div>
<div class="t" id="t73" style="left:659.35px;top:1622.00px;font-size:12.50px;letter-spacing:0.387px;color:#2d2e2a;">subject to monitoring. Individuals found performing unauthorized activities are subject to disciplinary action including criminal</div>
<div class="t" id="t74" style="left:658.89px;top:1640.00px;font-size:12.50px;letter-spacing:0.640px;color:#2d2e2a;">prosecution.</div>
<div class="t" id="t75" style="left:659.42px;top:1676.00px;font-size:12.50px;letter-spacing:0.286px;color:#2d2e2a;">This system contains Controlled Unclassified Information (CUI). All individuals viewing, reproducing or disposing of this information are</div>
<div class="t" id="t76" style="left:658.87px;top:1694.00px;font-size:12.50px;letter-spacing:0.056px;color:#2d2e2a;">required to protect it in accordance with 32 CFR Part 2002 and GSA Order CIO 2103.2 CUI Policy.</div>
<div class="t" id="t77" style="left:479.36px;top:1749.00px;font-size:22.14px;letter-spacing:-1.495px;font-weight:bold;color:#f0f0f0;">SAM.gov</div>
<div class="t" id="t78" style="left:479.42px;top:1779.00px;font-size:23.10px;letter-spacing:-1.118px;font-weight:bold;color:#f0f0f0;">An official website of the U.S. General Services Administration</div>
</body></html>
